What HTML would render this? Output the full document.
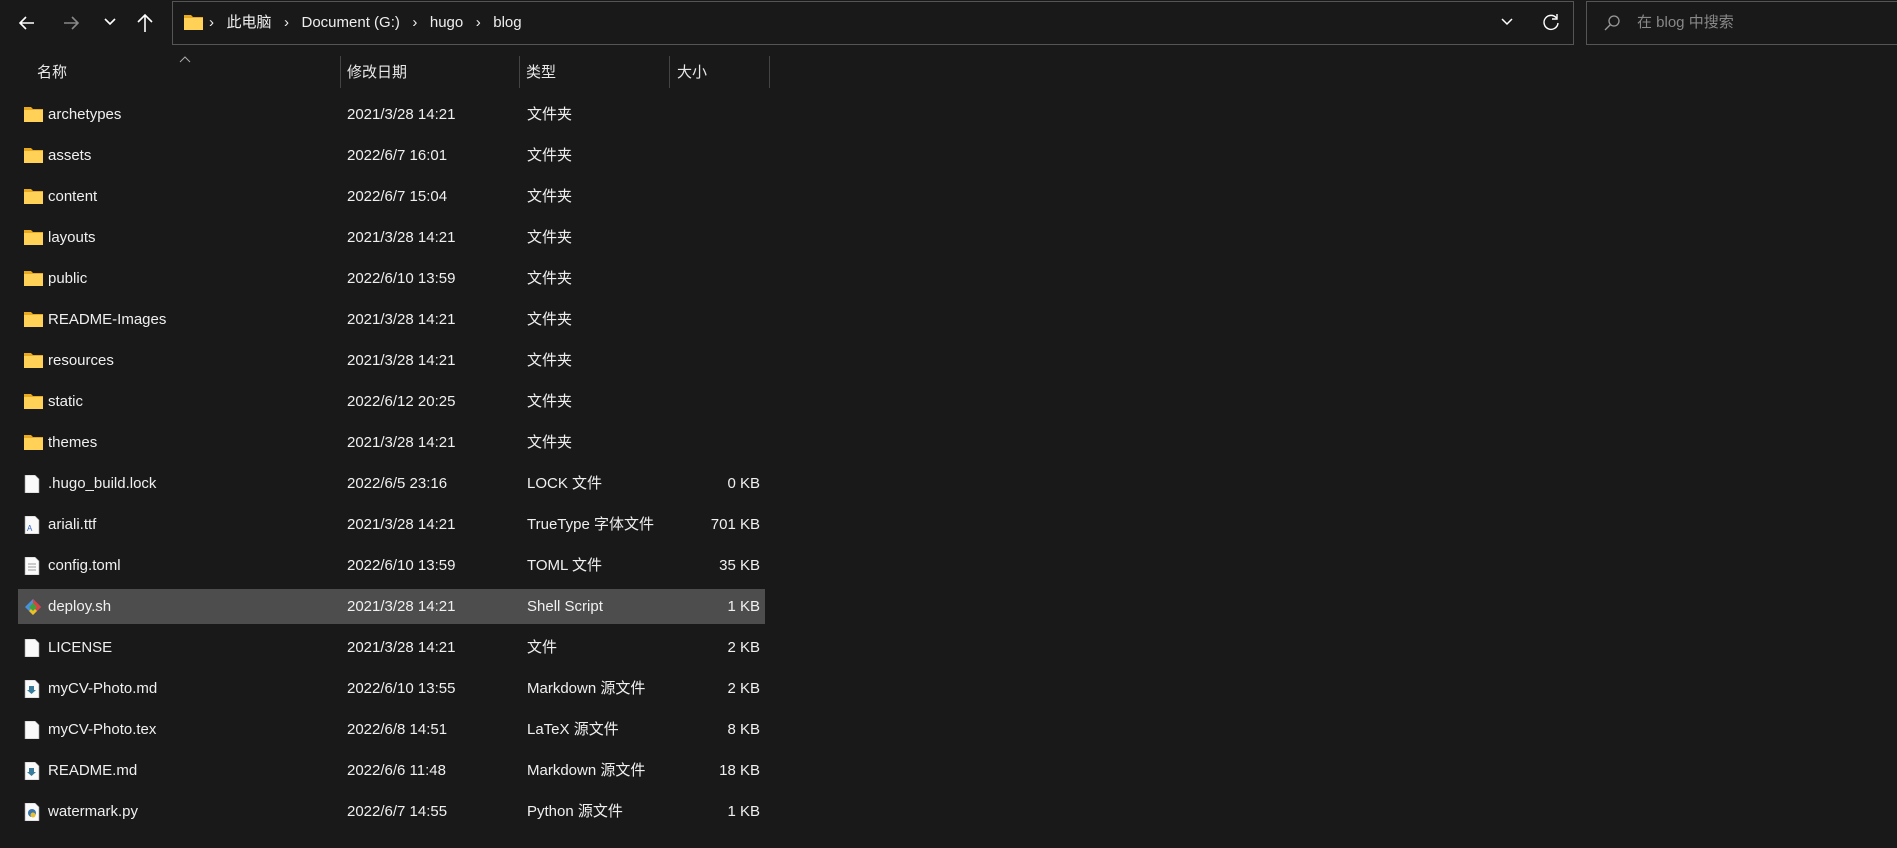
<!DOCTYPE html>
<html><head><meta charset="utf-8"><style>
*{margin:0;padding:0;box-sizing:border-box}
body{width:1897px;height:848px;background:#191919;color:#fff;font-family:"Liberation Sans","Noto Sans CJK SC",sans-serif;font-size:15px;line-height:19px;position:relative;overflow:hidden}
.a{position:absolute;white-space:nowrap}
.box{position:absolute;border:1px solid #555;}
.sep{position:absolute;top:56px;height:32px;width:1px;background:#444}
.row{position:absolute;left:18px;width:747px;height:35px}
.row.sel{background:#4d4d4d}
.row span{position:absolute;top:8px;white-space:nowrap;color:#f0f0f0;line-height:19px;height:19px}
.row .n{left:30px}.row .d{left:329px}.row .t{left:509px}.row .s{right:5px}
.row svg{position:absolute;left:6px;top:9px}
</style></head><body>
<svg class="a" style="left:18px;top:14px" width="18" height="18" viewBox="0 0 18 18"><path d="M16 9H2M8 3L2 9l6 6" stroke="#fff" stroke-width="1.6" fill="none"/></svg>
<svg class="a" style="left:62px;top:14px" width="18" height="18" viewBox="0 0 18 18"><path d="M2 9h14M10 3l6 6-6 6" stroke="#888" stroke-width="1.6" fill="none"/></svg>
<svg class="a" style="left:103px;top:17px" width="14" height="10" viewBox="0 0 14 10"><path d="M2 2l5 5 5-5" stroke="#fff" stroke-width="1.6" fill="none"/></svg>
<svg class="a" style="left:136px;top:13px" width="18" height="20" viewBox="0 0 18 20"><path d="M9 19V2M2 9l7-7 7 7" stroke="#fff" stroke-width="1.6" fill="none"/></svg>
<div class="box" style="left:172px;top:1px;width:1402px;height:44px"></div>
<svg class="a" style="left:184px;top:14px" width="19" height="16" viewBox="0 0 19 16"><path d="M0 1h7l2 2h10v13H0z" fill="#e8a820"/><rect x="0" y="4" width="19" height="12" fill="#ffd257"/></svg>
<div class="a" style="left:209px;top:13px;font-size:15px;color:#eee">›&nbsp;&nbsp;&nbsp;此电脑&nbsp;&nbsp;&nbsp;›&nbsp;&nbsp;&nbsp;Document (G:)&nbsp;&nbsp;&nbsp;›&nbsp;&nbsp;&nbsp;hugo&nbsp;&nbsp;&nbsp;›&nbsp;&nbsp;&nbsp;blog</div>
<svg class="a" style="left:1500px;top:17px" width="14" height="10" viewBox="0 0 14 10"><path d="M2 2l5 5 5-5" stroke="#fff" stroke-width="1.5" fill="none"/></svg>
<svg class="a" style="left:1542px;top:13px" width="18" height="18" viewBox="0 0 18 18"><path d="M14.5 5A7 7 0 1 0 16 10" stroke="#fff" stroke-width="1.4" fill="none"/><path d="M15 1v5h-5" stroke="#fff" stroke-width="1.4" fill="none"/></svg>
<div class="box" style="left:1586px;top:1px;width:320px;height:44px"></div>
<svg class="a" style="left:1603px;top:14px" width="18" height="18" viewBox="0 0 18 18"><circle cx="11" cy="7" r="5" stroke="#999" stroke-width="1.3" fill="none"/><path d="M7.5 10.5L2 16" stroke="#999" stroke-width="1.3"/></svg>
<div class="a" style="left:1637px;top:13px;color:#888">在 blog 中搜索</div>
<svg class="a" style="left:179px;top:56px" width="12" height="8" viewBox="0 0 12 8"><path d="M1 6l5-5 5 5" stroke="#aaa" stroke-width="1" fill="none"/></svg>
<div class="a" style="left:37px;top:63px;color:#e8e8e8">名称</div>
<div class="sep" style="left:340px"></div>
<div class="a" style="left:347px;top:63px;color:#e8e8e8">修改日期</div>
<div class="sep" style="left:519px"></div>
<div class="a" style="left:526px;top:63px;color:#e8e8e8">类型</div>
<div class="sep" style="left:669px"></div>
<div class="a" style="left:677px;top:63px;color:#e8e8e8">大小</div>
<div class="sep" style="left:769px"></div>

<div id="rows"></div>
<script>
var F='<svg width="19" height="16" viewBox="0 0 19 16"><path d="M0 1h7l2 2h10v13H0z" fill="#e8a820"/><rect x="0" y="4" width="19" height="12" fill="#ffd257"/></svg>';
function doc(c){return '<svg width="16" height="18" viewBox="0 0 16 18"><path d="M1 0h10l4 4v14H1z" fill="#fafafa" stroke="#999" stroke-width=".6"/>'+(c||'')+'</svg>';}
var D=doc(),T=doc('<path d="M4 7h8M4 10h8M4 13h8" stroke="#999"/>'),A=doc('<text x="3" y="15" font-size="8" fill="#36c" font-family="Liberation Sans">A</text>'),M=doc('<path d="M5 6h5v4h2l-4.5 4L3 10h2z" fill="#3a7a9a"/>'),P=doc('<circle cx="8" cy="10" r="4" fill="#3a76b0"/><circle cx="9" cy="12" r="2.5" fill="#e8c030"/>');
var G='<svg width="18" height="18" viewBox="0 0 18 18"><path d="M9 1l8 8-8 8-8-8z" fill="#4a90e0"/><path d="M9 1l8 8-4 4-4-4z" fill="#e04040"/><path d="M9 9l4 4-4 4-4-4z" fill="#f0c020"/><path d="M5 9l4-4 4 4-4 4z" fill="#40a040"/></svg>';
var r=[[F,'archetypes','2021/3/28 14:21','文件夹',''],[F,'assets','2022/6/7 16:01','文件夹',''],[F,'content','2022/6/7 15:04','文件夹',''],[F,'layouts','2021/3/28 14:21','文件夹',''],[F,'public','2022/6/10 13:59','文件夹',''],[F,'README-Images','2021/3/28 14:21','文件夹',''],[F,'resources','2021/3/28 14:21','文件夹',''],[F,'static','2022/6/12 20:25','文件夹',''],[F,'themes','2021/3/28 14:21','文件夹',''],[D,'.hugo_build.lock','2022/6/5 23:16','LOCK 文件','0 KB'],[A,'ariali.ttf','2021/3/28 14:21','TrueType 字体文件','701 KB'],[T,'config.toml','2022/6/10 13:59','TOML 文件','35 KB'],[G,'deploy.sh','2021/3/28 14:21','Shell Script','1 KB'],[D,'LICENSE','2021/3/28 14:21','文件','2 KB'],[M,'myCV-Photo.md','2022/6/10 13:55','Markdown 源文件','2 KB'],[D,'myCV-Photo.tex','2022/6/8 14:51','LaTeX 源文件','8 KB'],[M,'README.md','2022/6/6 11:48','Markdown 源文件','18 KB'],[P,'watermark.py','2022/6/7 14:55','Python 源文件','1 KB']];
var h='';r.forEach(function(x,i){h+='<div class="row'+(i==12?' sel':'')+'" style="top:'+(97+i*41)+'px">'+x[0]+'<span class="n">'+x[1]+'</span><span class="d">'+x[2]+'</span><span class="t">'+x[3]+'</span><span class="s">'+x[4]+'</span></div>';});
document.getElementById('rows').innerHTML=h;
</script>
</body></html>
